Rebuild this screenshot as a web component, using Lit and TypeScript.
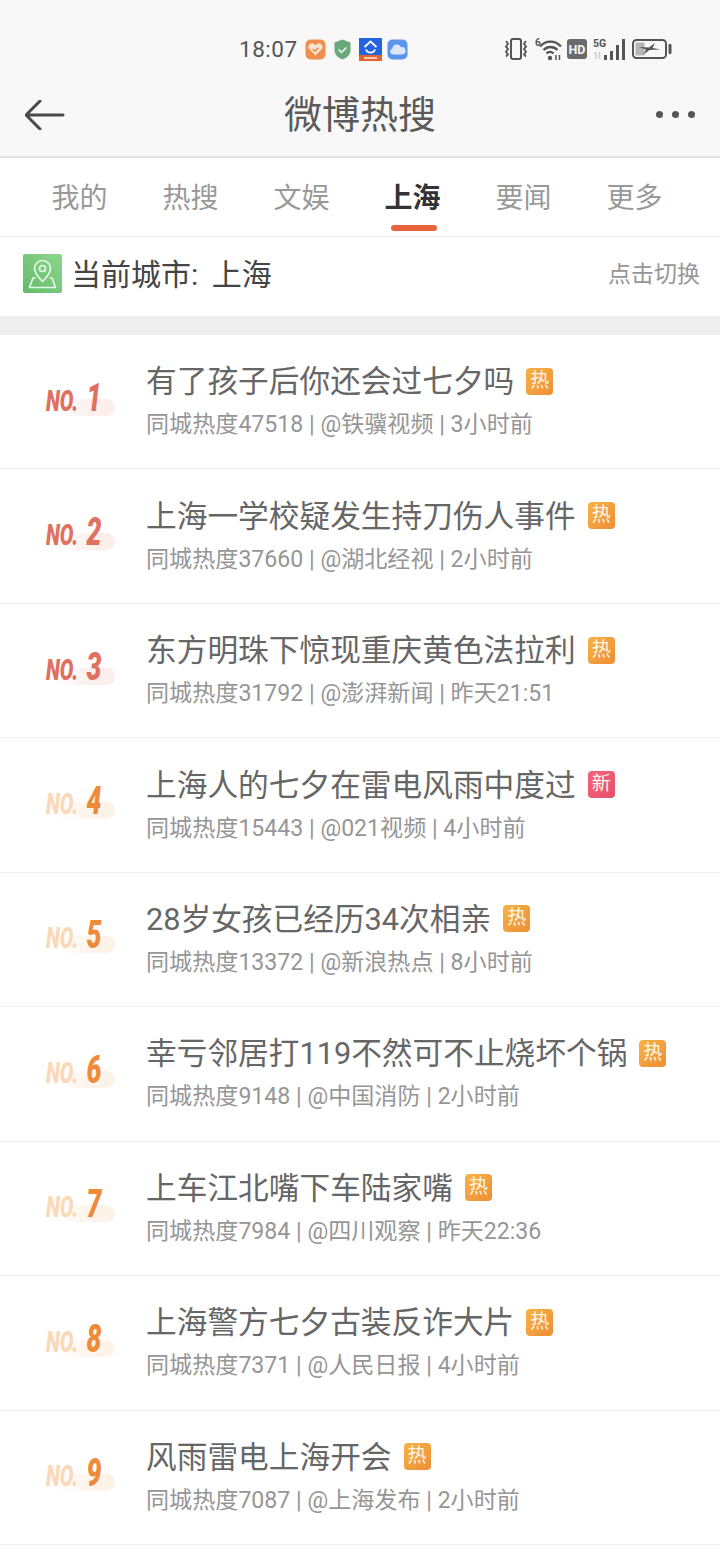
import { LitElement, css, html, svg } from 'lit';
import { customElement } from 'lit/decorators.js';

const TABS = ['我的', '热搜', '文娱', '上海', '要闻', '更多'];

const ITEMS = [
  { title: '有了孩子后你还会过七夕吗', tag: '热', heat: 47518, source: '铁骥视频', time: '3小时前' },
  { title: '上海一学校疑发生持刀伤人事件', tag: '热', heat: 37660, source: '湖北经视', time: '2小时前' },
  { title: '东方明珠下惊现重庆黄色法拉利', tag: '热', heat: 31792, source: '澎湃新闻', time: '昨天21:51' },
  { title: '上海人的七夕在雷电风雨中度过', tag: '新', heat: 15443, source: '021视频', time: '4小时前' },
  { title: '28岁女孩已经历34次相亲', tag: '热', heat: 13372, source: '新浪热点', time: '8小时前' },
  { title: '幸亏邻居打119不然可不止烧坏个锅', tag: '热', heat: 9148, source: '中国消防', time: '2小时前' },
  { title: '上车江北嘴下车陆家嘴', tag: '热', heat: 7984, source: '四川观察', time: '昨天22:36' },
  { title: '上海警方七夕古装反诈大片', tag: '热', heat: 7371, source: '人民日报', time: '4小时前' },
  { title: '风雨雷电上海开会', tag: '热', heat: 7087, source: '上海发布', time: '2小时前' },
];

const leftIcons = html`
  <svg width="21" height="21" viewBox="0 0 21 21">
    <rect width="20" height="20" x=".5" y=".5" rx="5" fill="#ee8f4e" />
    <path d="M10.5 16.5 4.6 10.6a3.5 3.5 0 0 1 5-5l.9.9.9-.9a3.5 3.5 0 0 1 5 5z" fill="#fbe3cf" />
    <path d="m7.6 10 2.2 2.2 3.6-3.4" fill="none" stroke="#ee8f4e" stroke-width="1.6" />
  </svg>
  <svg width="19" height="21" viewBox="0 0 19 21">
    <path d="M9.500 .5 17.500 3.500V11c0 4.500-3.500 8-8 9.500C5 19 1.500 15.500 1.500 11V3.500z" fill="#69a878" />
    <path d="m5.500 10.500 3 2.800 5-4.800" fill="none" stroke="#e9f4ec" stroke-width="1.700" />
  </svg>
  <svg width="23" height="23" viewBox="0 0 23 23">
    <rect width="23" height="23" fill="#2563e0" />
    <rect y="17" width="23" height="6" fill="#e8632c" />
    <path d="m5.500 9 6-5.500 6 5.500" fill="none" stroke="#fff" stroke-width="1.800" />
    <path d="M7 11.500a4.800 4.800 0 0 0 9 0" fill="none" stroke="#fff" stroke-width="1.800" />
    <rect x="5" y="19" width="13" height="2" fill="#f6c9b4" />
  </svg>
  <svg class="cloud" width="21" height="21" viewBox="0 0 21 21">
    <rect width="20" height="20" x=".5" y=".5" rx="5" fill="#5b96ee" />
    <path d="M6 15.500a3 3 0 0 1-.6-5.900 4.500 4.500 0 0 1 8.600-1.400 3.700 3.700 0 0 1 1.500 7.300z" fill="#dbe8fb" />
  </svg>
`;

const rightIcons = html`
  <svg width="26" height="24" viewBox="0 0 26 24" fill="none" stroke="#555">
    <rect x="8" y="2" width="10" height="20" rx="2" stroke-width="2" />
    <path d="m3 4 2 2.700-2 2.700 2 2.700-2 2.700 2 2.700-2 2M23 4l-2 2.700 2 2.700-2 2.700 2 2.700-2 2.700 2 2" stroke-width="1.800" />
  </svg>
  <svg width="32" height="24" viewBox="0 0 32 24" fill="none" stroke="#555">
    <text x="3" y="9" font-size="10" font-weight="700" fill="#555" stroke="none" font-family="Roboto, sans-serif">6</text>
    <path d="M8 9.500c6-6.500 15-6.500 21 0M11.500 13c4-4 10-4 14 0M14.500 16.500c2-2 5-2 7 0" stroke-width="2.400" />
    <circle cx="18" cy="21" r="2.200" fill="#555" stroke="none" />
    <path d="M24 18v5M27.500 18v5" stroke-width="1.500" />
  </svg>
  <svg width="20" height="20" viewBox="0 0 20 20">
    <rect width="20" height="20" rx="3" fill="#6a6a6a" />
    <text x="10" y="15" text-anchor="middle" font-size="12.500" font-weight="700" fill="#f4f4f4" font-family="Roboto, sans-serif">HD</text>
  </svg>
  <svg width="38" height="24" viewBox="0 0 38 24">
    <text x="3" y="10" font-size="10.500" font-weight="700" fill="#555" font-family="Roboto, sans-serif">5G</text>
    <text x="3" y="22" font-size="9" font-weight="700" fill="#c8c8c8" font-family="Roboto, sans-serif">1l</text>
    <rect x="14" y="18" width="3" height="5" fill="#555" />
    <rect x="20" y="14" width="3" height="9" fill="#555" />
    <rect x="26" y="8" width="3" height="15" fill="#555" />
    <rect x="32" y="2" width="3" height="21" fill="#555" />
  </svg>
  <svg width="41" height="20" viewBox="0 0 41 20">
    <rect x="2" y="1" width="33" height="18" rx="3.500" fill="none" stroke="#555" stroke-width="2" />
    <rect x="4.500" y="3.500" width="9" height="13" rx="1" fill="#b5b5b5" />
    <path d="M8 8 18 8.500l6-4.500-2.500 5 8 1.500-11 .5-6 4.500 2.500-5z" fill="#555" />
    <rect x="37.500" y="5" width="3" height="10" rx="1" fill="#555" />
  </svg>
`;

const backArrow = svg`
  <path d="M38 15H2M15 1 1 15l14 14" fill="none" stroke="#4a4a4a" stroke-width="3" stroke-linecap="round" stroke-linejoin="round" />
`;

@customElement('app-root')
export class AppRoot extends LitElement {
  static styles = css`
    :host {
      display: block;
      width: 720px;
      height: 1563px;
      overflow: hidden;
      background: #fff;
      font-family: Roboto, 'Noto Sans CJK SC', sans-serif;
    }
    .top {
      height: 156px;
      background: #f8f8f8;
      border-bottom: 2px solid #e2e2e2;
    }
    .status {
      height: 76px;
      padding: 22px 48px 0 239px;
      box-sizing: border-box;
      display: flex;
      align-items: center;
    }
    .time {
      font-size: 22.500px;
      color: #555;
      letter-spacing: 0.500px;
      margin-right: 7px;
    }
    .left-icons {
      display: flex;
      align-items: center;
      gap: 7px;
    }
    .cloud {
      margin-left: -2px;
    }
    .right-icons {
      display: flex;
      align-items: center;
      gap: 3px;
      margin-left: auto;
    }
    .nav {
      height: 77px;
      padding: 0 25px 3px;
      display: flex;
      align-items: center;
      justify-content: space-between;
    }
    .nav-title {
      font-size: 38px;
      line-height: 76px;
      color: #5a5a5a;
      margin-left: -1px;
    }
    .dots {
      display: flex;
      gap: 9px;
    }
    .dots i {
      width: 7px;
      height: 7px;
      border-radius: 50%;
      background: #555;
    }
    .tabs {
      height: 78px;
      padding-left: 24px;
      display: flex;
      border-bottom: 1px solid #f1f1f1;
    }
    .tab {
      position: relative;
      width: 111px;
      text-align: center;
      font-size: 28px;
      line-height: 82px;
      color: #999;
    }
    .tab.active {
      color: #333;
      font-weight: 700;
    }
    .tab.active::after {
      content: '';
      position: absolute;
      left: 34px;
      bottom: 5px;
      width: 46px;
      height: 6px;
      border-radius: 3px;
      background: #e8643a;
    }
    .city {
      height: 79px;
      padding: 0 20px 7px 23px;
      box-sizing: border-box;
      display: flex;
      align-items: center;
    }
    .city-icon {
      margin-right: 9px;
    }
    .city-name {
      font-size: 30px;
      line-height: 40px;
      padding-top: 4px;
      color: #444;
      word-spacing: 6px;
    }
    .city-switch {
      margin-left: auto;
      font-size: 23px;
      line-height: 32px;
      padding-top: 4px;
      color: #969696;
    }
    .gap {
      height: 19px;
      background: #eeeeee;
    }
    .row {
      height: 134.450px;
      box-sizing: border-box;
      border-bottom: 1px solid #efefef;
      display: flex;
      align-items: center;
    }
    .rank {
      position: relative;
      width: 146px;
      height: 60px;
      flex: none;
    }
    .rank .pill {
      position: absolute;
      left: 52px;
      top: 27px;
      width: 63px;
      height: 17px;
      border-radius: 9px;
    }
    .rank .no {
      position: absolute;
      left: 46px;
      top: 6px;
      white-space: nowrap;
      font-weight: 900;
      font-style: italic;
      line-height: 40px;
      transform-origin: left center;
      transform: scaleX(0.700);
    }
    .no b {
      font-size: 29px;
      font-weight: 900;
    }
    .no span {
      font-size: 38px;
      margin-left: 12px;
    }
    .top3 .pill {
      background: linear-gradient(90deg, #fff, #fbeeeb 70%);
    }
    .top3 .no {
      color: #e0705f;
    }
    .rest .pill {
      background: linear-gradient(90deg, #fff, #fdf3e9 70%);
    }
    .rest .no b {
      color: #fad9b8;
    }
    .rest .no span {
      color: #ee8a38;
    }
    .text {
      padding-bottom: 2px;
    }
    .title-line {
      display: flex;
      align-items: center;
      gap: 12px;
    }
    .title {
      font-size: 30.700px;
      line-height: 44px;
      color: #666;
    }
    .tag {
      width: 27px;
      height: 27px;
      margin-top: -2px;
      border-radius: 4px;
      color: #fff6e6;
      font-size: 19px;
      line-height: 26px;
      text-align: center;
    }
    .tag.hot {
      background: linear-gradient(135deg, #f6b345, #ee8e37);
    }
    .tag.new {
      background: linear-gradient(135deg, #f2637e, #e8506c);
    }
    .meta {
      margin-top: 5px;
      font-size: 23.100px;
      line-height: 32px;
      color: #969696;
      white-space: nowrap;
    }
  `;

  render() {
    return html`
      <div class="top">
        <div class="status">
          <span class="time">18:07</span>
          <span class="left-icons">${leftIcons}</span>
          <span class="right-icons">${rightIcons}</span>
        </div>
        <div class="nav">
          <svg width="40" height="30" viewBox="0 0 40 30">${backArrow}</svg>
          <span class="nav-title">微博热搜</span>
          <span class="dots"><i></i><i></i><i></i></span>
        </div>
      </div>
      <div class="tabs">
        ${TABS.map(t => html`<div class="tab ${t === '上海' ? 'active' : ''}">${t}</div>`)}
      </div>
      <div class="city">
        <svg class="city-icon" width="39" height="39" viewBox="0 0 39 39">
          <defs>
            <linearGradient id="cityBg" x1="1" y1="0" x2="0" y2="1">
              <stop offset="0" stop-color="#8ed68d" />
              <stop offset="1" stop-color="#62bb6b" />
            </linearGradient>
          </defs>
          <rect width="39" height="39" rx="2" fill="url(#cityBg)" />
          <path d="M19.500 27.500C15 23 11.500 19 11.500 14.500a8 8 0 0 1 16 0c0 4.500-3.500 8.500-8 13z" fill="none" stroke="#e9f7e8" stroke-width="1.700" />
          <circle cx="19.500" cy="14.500" r="3" fill="none" stroke="#e9f7e8" stroke-width="1.700" />
          <path d="M12.500 24H10l-3.500 9.500h26L29 24h-2.500" fill="none" stroke="#e9f7e8" stroke-width="1.700" stroke-linejoin="round" />
        </svg>
        <span class="city-name">当前城市: 上海</span>
        <span class="city-switch">点击切换</span>
      </div>
      <div class="gap"></div>
      ${ITEMS.map(
        (item, i) => html`
          <div class="row">
            <div class="rank ${i < 3 ? 'top3' : 'rest'}">
              <div class="pill"></div>
              <div class="no"><b>NO.</b><span>${i + 1}</span></div>
            </div>
            <div class="text">
              <div class="title-line">
                <span class="title">${item.title}</span>
                <span class="tag ${item.tag === '新' ? 'new' : 'hot'}">${item.tag}</span>
              </div>
              <div class="meta">同城热度${item.heat} | @${item.source} | ${item.time}</div>
            </div>
          </div>
        `
      )}
    `;
  }
}
